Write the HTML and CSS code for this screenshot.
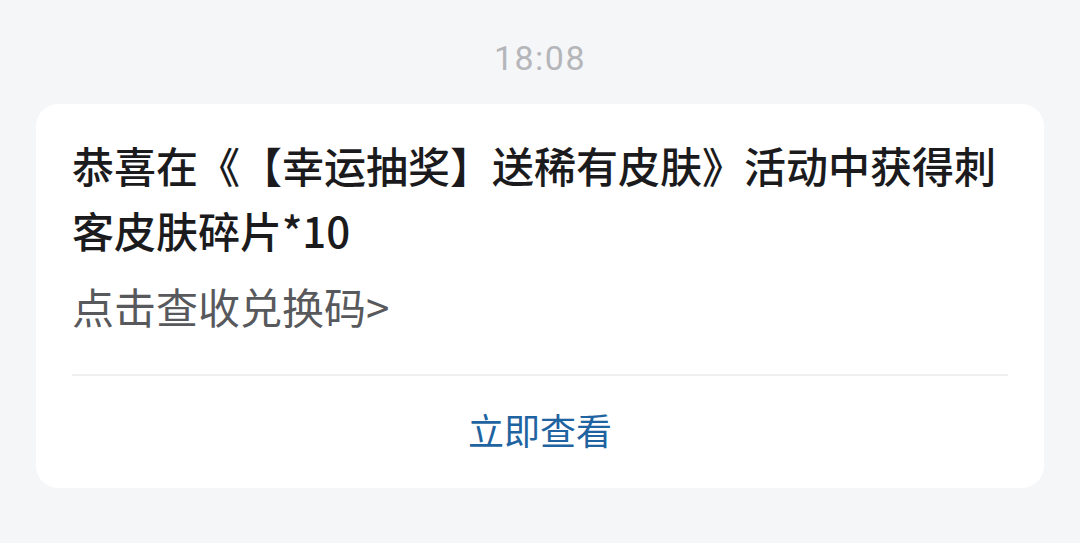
FILE: index.html
```html
<!DOCTYPE html>
<html lang="zh">
<head>
<meta charset="utf-8">
<link rel="stylesheet" href="styles.css">
</head>
<body>
<div class="page">
  <div class="time">18:08</div>
  <div class="card">
    <div class="body">
      <div class="title">恭喜在《【幸运抽奖】送稀有皮肤》活动中获得刺客皮肤碎片*10</div>
      <div class="sub">点击查收兑换码&gt;</div>
    </div>
    <div class="divider"></div>
    <div class="action">立即查看</div>
  </div>
</div>
</body>
</html>
```
FILE: styles.css
```css
html, body {
  margin: 0;
  padding: 0;
  background: #f5f6f8;
}
.page {
  width: 1080px;
  height: 543px;
  padding: 0 36px;
  box-sizing: border-box;
  font-family: "Noto Sans CJK SC", "Noto Sans", sans-serif;
  text-spacing-trim: space-all;
}
.time {
  padding-top: 36px;
  height: 104px;
  box-sizing: border-box;
  text-align: center;
  font-family: Roboto, "Noto Sans", sans-serif;
  font-size: 34px;
  letter-spacing: 1.5px;
  line-height: 44px;
  color: #b5b6ba;
}
.card {
  background: #ffffff;
  border-radius: 22px;
  height: 384px;
  display: flex;
  flex-direction: column;
}
.body {
  padding: 28px 36px 0 36px;
  height: 270px;
  box-sizing: border-box;
}
.title {
  font-size: 42px;
  line-height: 65px;
  font-weight: 500;
  color: #1b1b1d;
}
.sub {
  margin-top: 19px;
  font-size: 42px;
  line-height: 50px;
  color: #58595c;
}
.divider {
  margin: 0 36px;
  height: 2px;
  background: #eff0f2;
}
.action {
  flex: 1;
  display: flex;
  align-items: center;
  justify-content: center;
  padding-bottom: 6px;
  font-size: 36px;
  color: #1f64a0;
}
```
